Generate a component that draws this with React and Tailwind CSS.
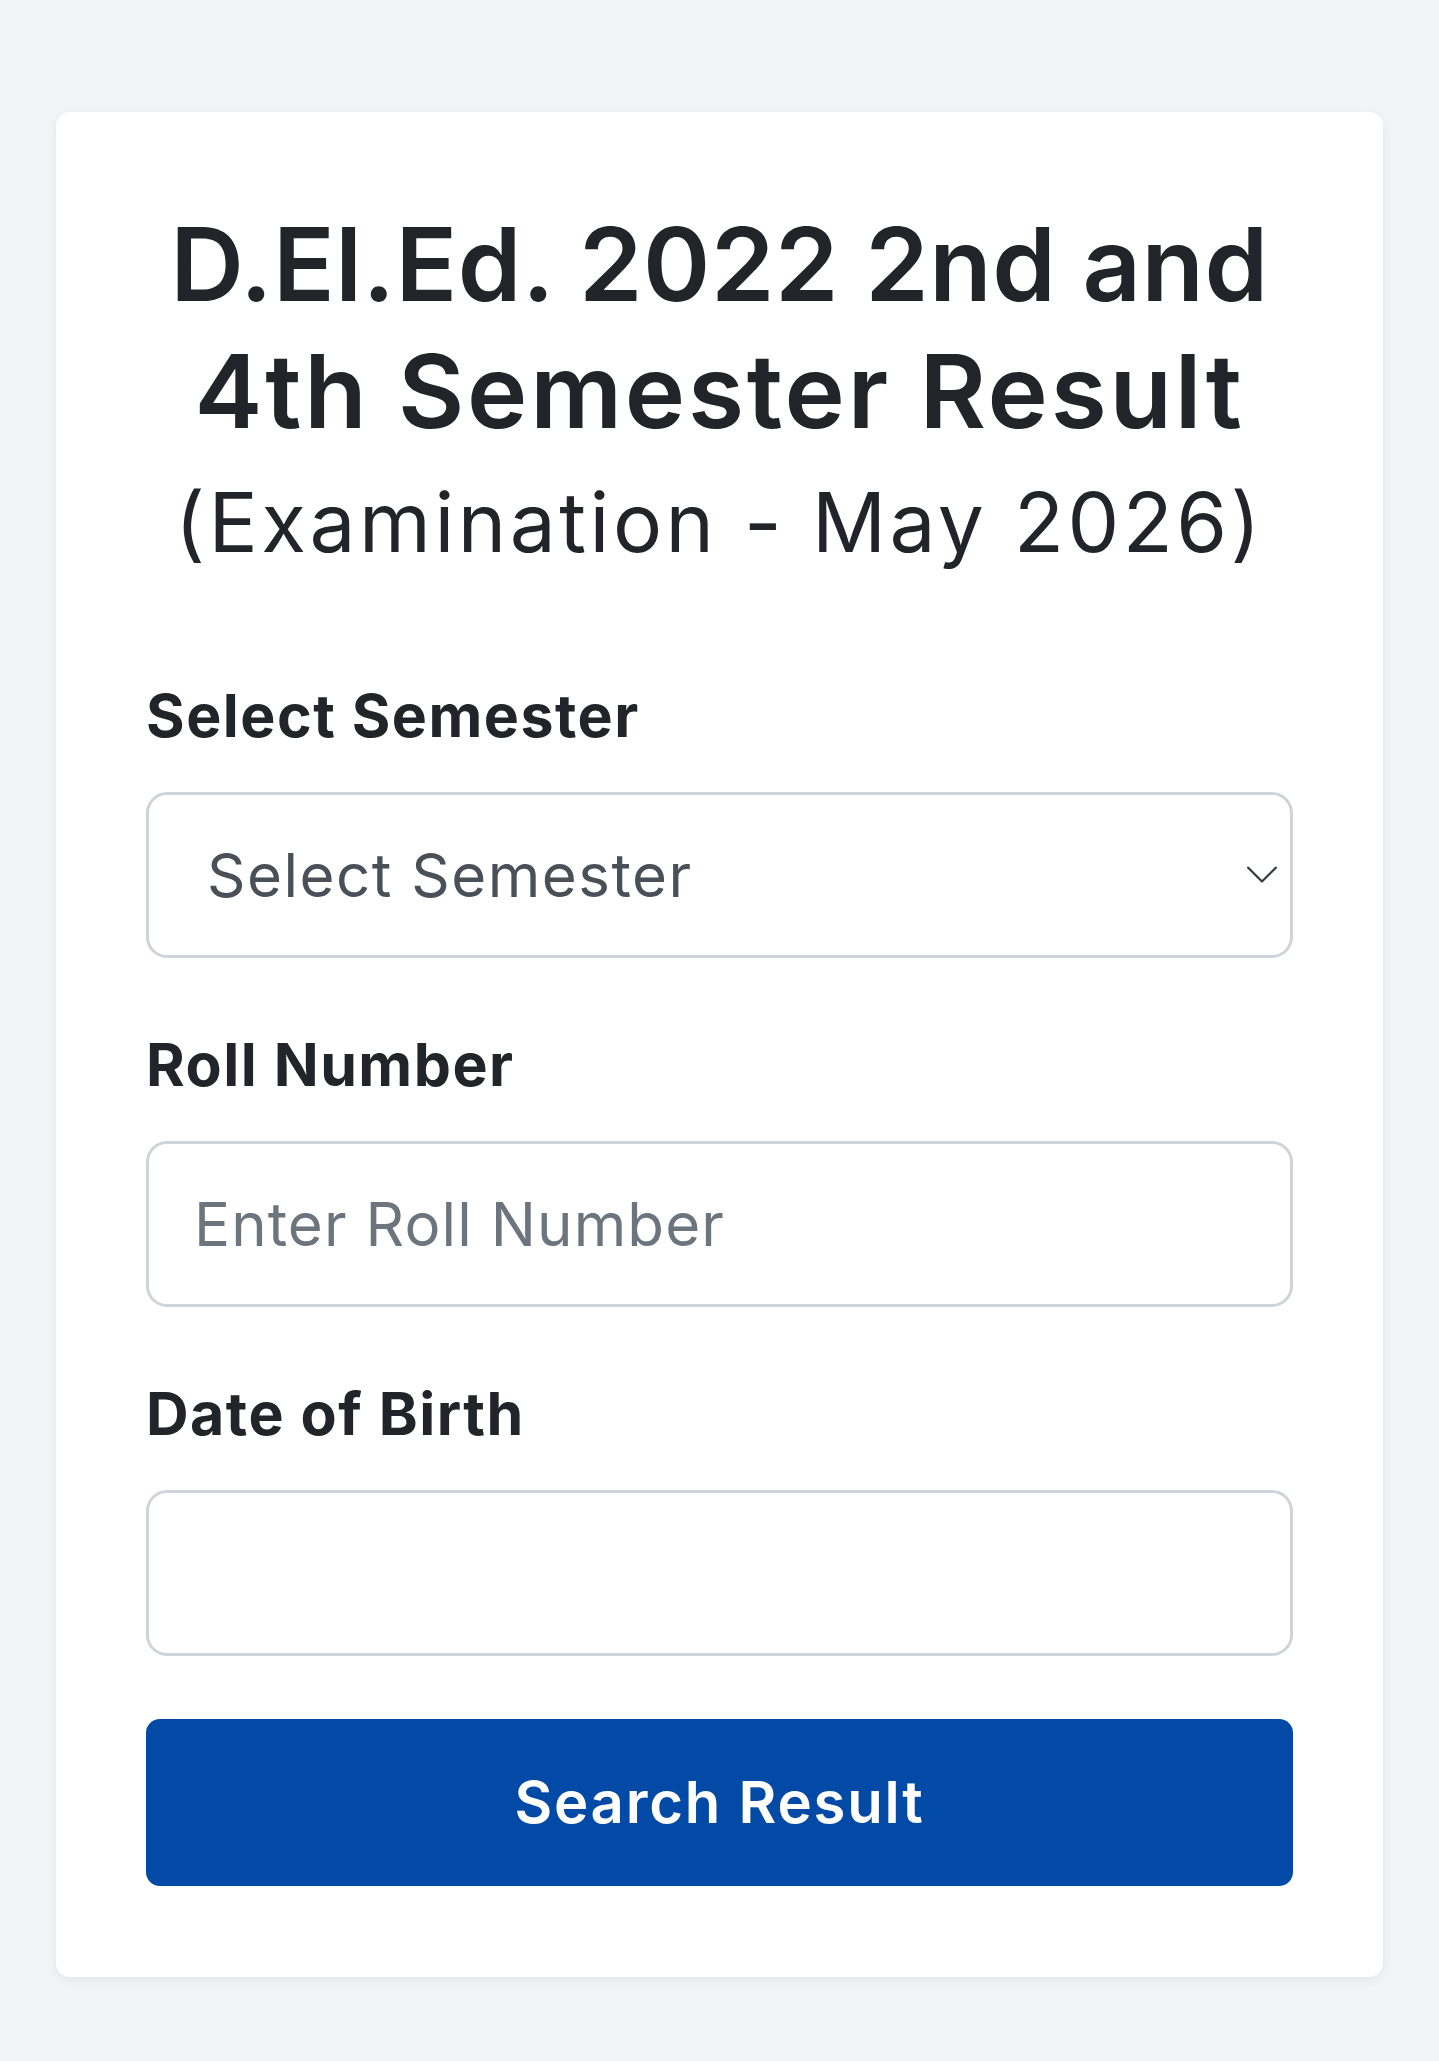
import React from "react";

function Chevron() {
  return (
    <svg
      className="pointer-events-none absolute right-[16px] top-1/2 -translate-y-1/2"
      width="30"
      height="17"
      viewBox="0 0 30 17"
      fill="none"
    >
      <polyline points="1,1 15,15 29,1" stroke="#343a40" strokeWidth="2.2" strokeLinecap="round" strokeLinejoin="round" />
    </svg>
  );
}

function Label({ children }) {
  return (
    <label className="block h-[70px] leading-[70px] mb-[41px] text-[59px] font-bold tracking-[1.5px] text-[#212529]">
      {children}
    </label>
  );
}

export default function App() {
  return (
    <div className="min-h-[2061px] bg-[#f3f4f6] px-[56px] pt-[112px] pb-[84px] font-[family-name:Inter,sans-serif]">
      <div className="bg-white rounded-[14px] shadow-[0_3px_12px_rgba(0,0,0,0.07)] px-[90px] pt-[89px] pb-[91px]">
        <h1 className="text-center text-[#212529]">
          <span className="block text-[102px] leading-[127px] font-semibold tracking-[0.5px]">D.El.Ed. 2022 2nd and</span>
          <span className="block text-[102px] leading-[127px] font-semibold tracking-[2.8px]">4th Semester Result</span>
          <span className="block text-[82px] leading-[136px] font-normal tracking-[3.5px]">(Examination - May 2026)</span>
        </h1>

        <form className="mt-[90px] flex flex-col">
          <div className="mb-[72px]">
            <Label>Select Semester</Label>
            <div className="relative">
              <select
                defaultValue=""
                className="block w-full h-[166px] appearance-none rounded-[21px] border-[3px] border-[#ced4da] bg-white pl-[58px] pr-[70px] text-[60px] tracking-[1.5px] text-[#495057] outline-none"
              >
                <option value="">Select Semester</option>
                <option value="2">2nd Semester</option>
                <option value="4">4th Semester</option>
              </select>
              <Chevron />
            </div>
          </div>

          <div className="mb-[72px]">
            <Label>Roll Number</Label>
            <input
              type="text"
              placeholder="Enter Roll Number"
              className="block w-full h-[166px] rounded-[21px] border-[3px] border-[#ced4da] bg-white pl-[45px] pr-[40px] text-[60px] tracking-[1.1px] text-[#212529] placeholder:text-[#6c757d] outline-none"
            />
          </div>

          <div className="mb-[63px]">
            <Label>Date of Birth</Label>
            <input
              type="text"
              className="block w-full h-[166px] rounded-[21px] border-[3px] border-[#ced4da] bg-white pl-[45px] pr-[40px] text-[60px] text-[#212529] outline-none"
            />
          </div>

          <button
            type="button"
            className="h-[167px] w-full rounded-[14px] bg-[#024aa5] text-white text-[58px] font-semibold tracking-[1.8px]"
          >
            Search Result
          </button>
        </form>
      </div>
    </div>
  );
}
